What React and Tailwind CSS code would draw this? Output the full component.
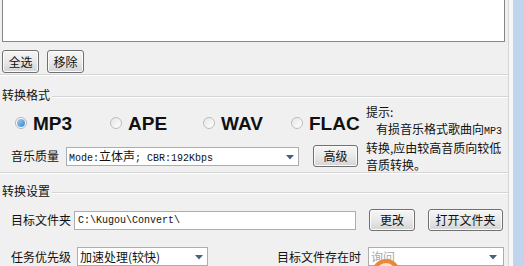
import React from "react";

const cjk = { fontFamily: '"Noto Sans CJK SC", "Liberation Sans", sans-serif' };
const mono = { fontFamily: '"Liberation Mono", "Noto Sans CJK SC", monospace' };

// ─── Win7 style push button ───────────────────────────────────────────────────
const Button = ({ children, className = "" }) => (
  <div
    className={`flex shrink-0 items-center justify-center rounded-[3px] border border-[#707070] bg-linear-to-b from-[#f6f6f6] via-[#e9e9e9] to-[#d4d4d4] text-[12px] text-[#111] shadow-[inset_0_0_0_1px_#fbfbfb] ${className}`}
  >
    {children}
  </div>
);

// ─── Combo box with the small arrow ──────────────────────────────────────────
const Combo = ({ children, className = "", arrowRight = "right-[4px]" }) => (
  <div
    className={`relative flex h-[19px] shrink-0 items-center border border-[#abadb3] bg-white pl-[2px] text-[12px] text-[#111] ${className}`}
  >
    {children}
    <svg
      className={`absolute top-[7px] ${arrowRight}`}
      width="8"
      height="5"
      viewBox="0 0 8 5"
    >
      <path d="M0 0h8L4 4.5z" fill="#4a5f80" />
    </svg>
  </div>
);

const Radio = ({ checked, label, className = "" }) => (
  <div className={`flex shrink-0 items-center gap-[6px] ${className}`}>
    {checked ? (
      <span className="flex h-[12px] w-[12px] items-center justify-center rounded-full border border-[#b3b3b3] bg-white">
        <span className="h-[8px] w-[8px] rounded-full bg-linear-to-br from-[#9fd0f5] to-[#3585d2]" />
      </span>
    ) : (
      <span className="h-[12px] w-[12px] rounded-full border border-[#bcbcbc] bg-linear-to-br from-[#e6e6e6] to-white" />
    )}
    <span
      className="text-[19px] font-bold leading-none text-[#111]"
      style={{ fontFamily: '"Liberation Sans", Arial, sans-serif' }}
    >
      {label}
    </span>
  </div>
);

const Etched = ({ className = "" }) => (
  <div className={`h-[2px] shrink-0 border-t border-b border-t-[#d5d5d5] border-b-white ${className}`} />
);

const GroupHeader = ({ title, className = "" }) => (
  <div className={`flex h-[16px] shrink-0 items-center pl-[2px] ${className}`}>
    <span className="text-[12px] leading-none text-[#111]">{title}</span>
    <Etched className="ml-[2px] flex-1 translate-y-[2px]" />
  </div>
);

export default function App() {
  return (
    <div className="flex h-[266px] w-[524px] overflow-hidden bg-[#f0f0f0]" style={cjk}>
      <div className="relative flex w-[508px] shrink-0 flex-col">
        {/* file list (top cut off) */}
        <div className="ml-[2px] h-[42px] w-[503px] shrink-0 border-x border-b border-[#868686] bg-white" />

        <div className="mt-[8px] flex shrink-0 gap-[8px] pl-[2px]">
          <Button className="h-[23px] w-[37px]">全选</Button>
          <Button className="h-[23px] w-[37px]">移除</Button>
        </div>

        <Etched className="mt-[1px]" />

        {/* 转换格式 */}
        <GroupHeader title="转换格式" className="mt-[11px]" />
        <div className="flex h-[64px] shrink-0 items-start">
          <div className="w-[366px] shrink-0">
            <div className="mt-[7px] flex h-[26px] items-center pl-[15px]">
              <Radio checked label="MP3" className="w-[95px]" />
              <Radio label="APE" className="w-[93px]" />
              <Radio label="WAV" className="w-[88px]" />
              <Radio label="FLAC" />
            </div>
            <div className="mt-[9px] flex h-[22px] items-center pl-[11px]">
              <span className="w-[48px] shrink-0 text-[12px] text-[#111]">音乐质量</span>
              <Combo className="ml-[7px] w-[233px]" arrowRight="right-[4px]">
                <span className="text-[10px]" style={mono}>
                  Mode:<span className="text-[12px]" style={cjk}>立体声</span>; CBR:192Kbps
                </span>
              </Combo>
              <Button className="ml-[14px] h-[22px] w-[45px]">高级</Button>
            </div>
          </div>
          <div className="whitespace-nowrap pt-[1px] text-[12px] leading-[16.5px] text-[#111]">
            <div>提示:</div>
            <div className="pl-[10px]">
              有损音乐格式歌曲向<span className="text-[10px]" style={mono}>MP3</span>
            </div>
            <div>转换,应由较高音质向较低</div>
            <div>音质转换。</div>
          </div>
        </div>

        <Etched className="mt-[5px]" />

        {/* 转换设置 */}
        <GroupHeader title="转换设置" className="mt-[9px]" />
        <div className="mt-[10px] flex h-[22px] shrink-0 items-center pl-[11px]">
          <span className="w-[60px] shrink-0 text-[12px] text-[#111]">目标文件夹</span>
          <div className="ml-[3px] flex h-[19px] w-[282px] shrink-0 items-center border border-[#abadb3] bg-white pl-[3px]">
            <span className="text-[10px] text-[#111]" style={mono}>C:\Kugou\Convert\</span>
          </div>
          <Button className="ml-[13px] h-[22px] w-[46px]">更改</Button>
          <Button className="ml-[13px] h-[22px] w-[75px]">打开文件夹</Button>
        </div>

        <div className="mt-[16px] flex h-[19px] shrink-0 items-center pl-[11px]">
          <span className="w-[60px] shrink-0 text-[12px] text-[#111]">任务优先级</span>
          <Combo className="ml-[6px] w-[131px]" arrowRight="right-[4px]">
            <span>加速处理(较快)</span>
          </Combo>
          <span className="ml-[69px] w-[84px] shrink-0 whitespace-nowrap text-[12px] text-[#111]">目标文件存在时</span>
          <Combo className="ml-[7px] w-[136px]" arrowRight="right-[6px]">
            <span className="text-[#a8a8a8]">询问</span>
          </Combo>
        </div>

        {/* watermark overlay */}
        <div className="absolute left-[372px] top-[259px] h-[28px] w-[28px] rounded-full border-[4px] border-[#e9893c] bg-[#fbe3cc]" />
      </div>

      <div className="w-[1px] shrink-0 bg-[#d6d6d6]" />
      <div className="w-[4px] shrink-0 bg-[#f7f7f7]" />
      <div className="w-[11px] shrink-0 bg-[#c0d4ee]" />
    </div>
  );
}
